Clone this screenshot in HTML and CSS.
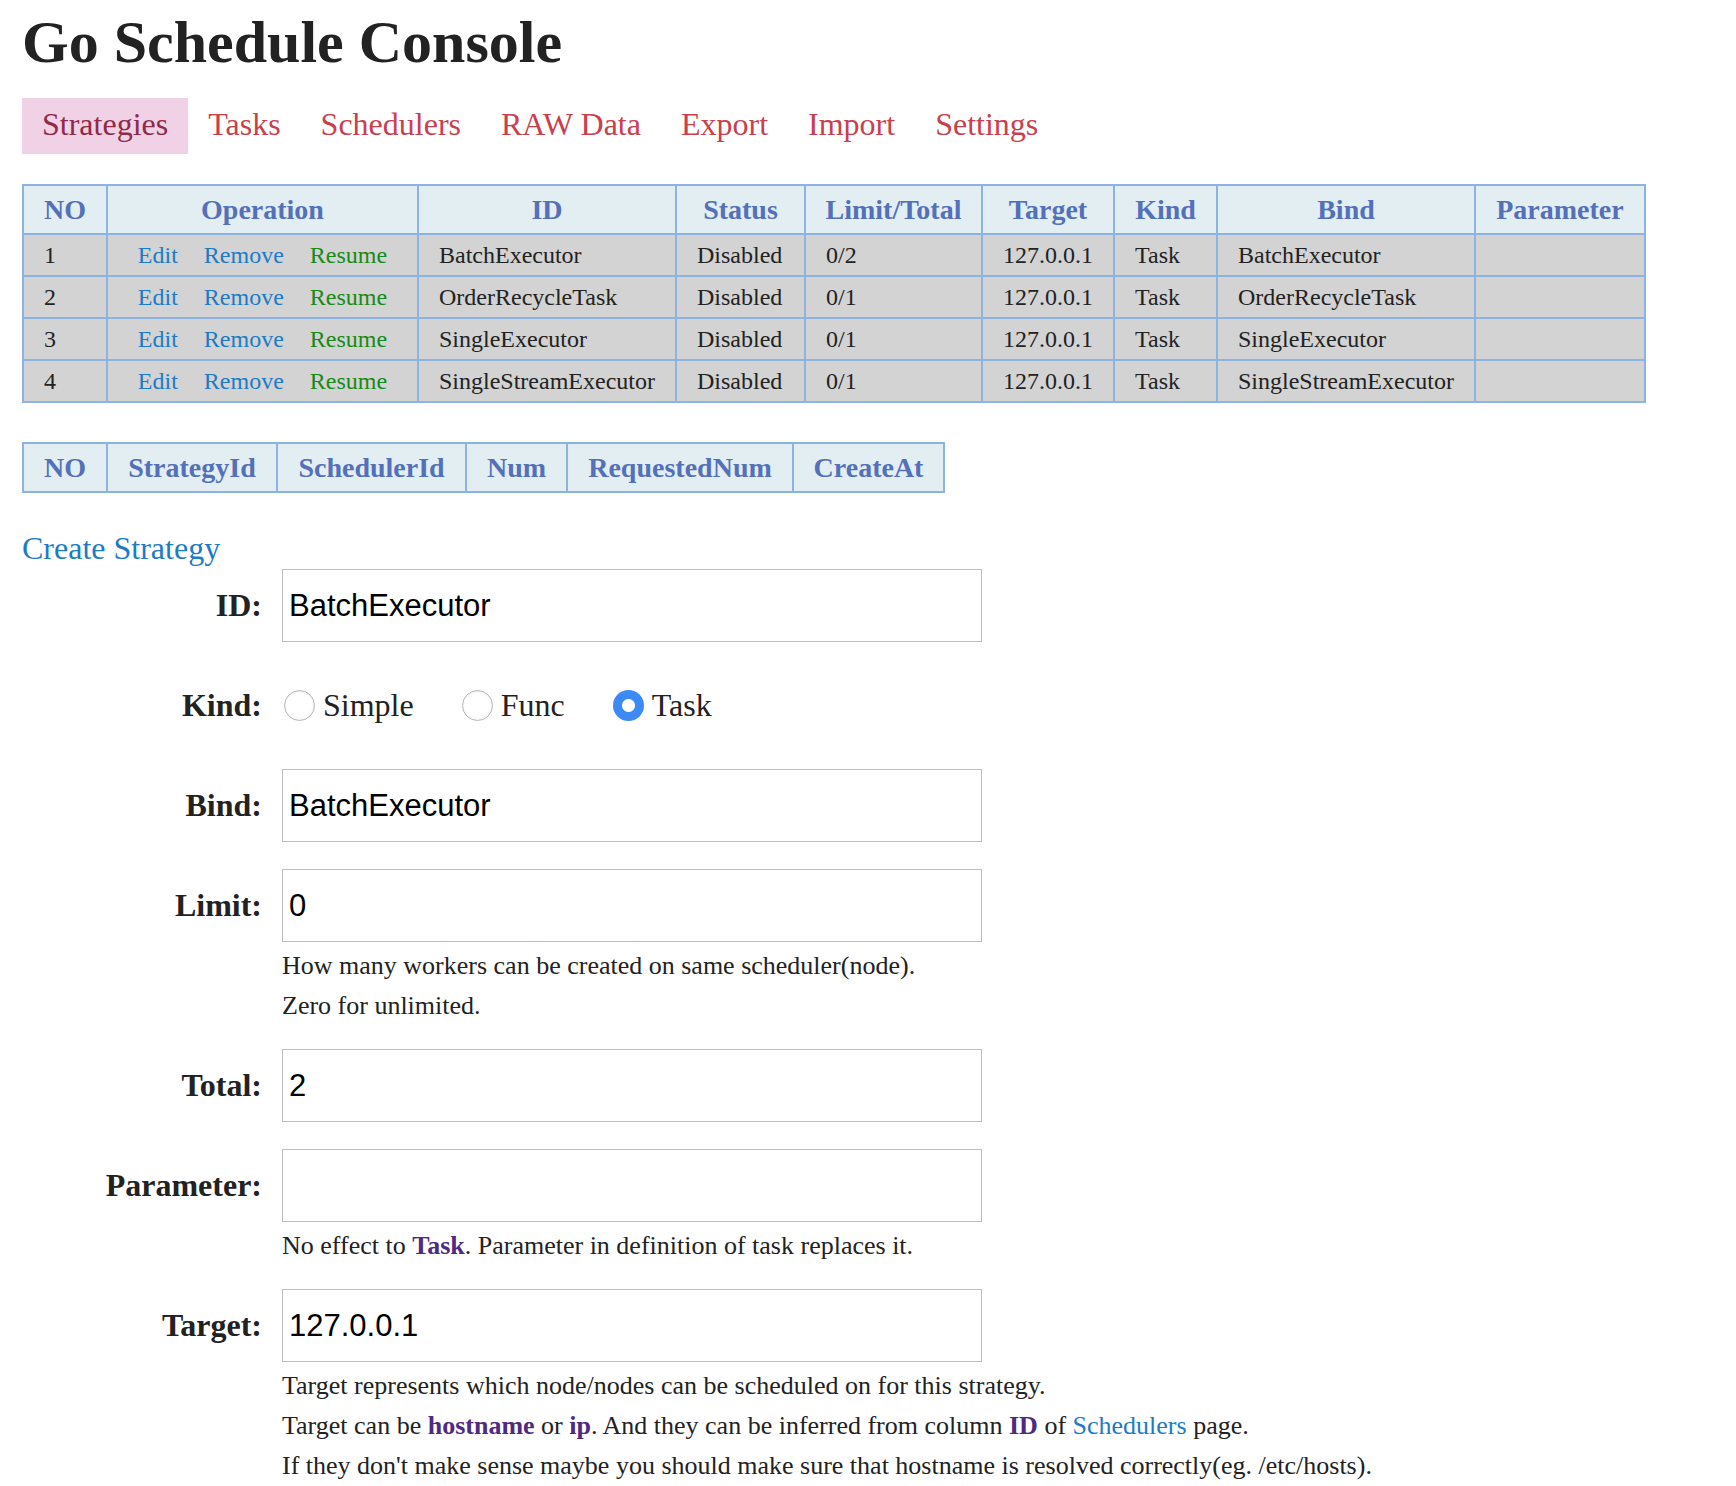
FILE: index.html
```html
<!DOCTYPE html>
<html lang="en">
<head>
<meta charset="utf-8">
<title>Go Schedule Console</title>
<link rel="stylesheet" href="styles.css">
</head>
<body>
<div class="page">
  <h1 class="title">Go Schedule Console</h1>
  <nav class="nav">
    <a class="nav-link active" href="#">Strategies</a>
    <a class="nav-link" href="#">Tasks</a>
    <a class="nav-link" href="#">Schedulers</a>
    <a class="nav-link" href="#">RAW Data</a>
    <a class="nav-link" href="#">Export</a>
    <a class="nav-link" href="#">Import</a>
    <a class="nav-link" href="#">Settings</a>
  </nav>

  <table class="grid grid-strategies">
    <colgroup>
      <col class="w84"><col class="w311"><col class="w258"><col class="w129"><col class="w177"><col class="w132"><col class="w103"><col class="w258"><col class="w170">
    </colgroup>
    <thead>
      <tr><th>NO</th><th>Operation</th><th>ID</th><th>Status</th><th>Limit/Total</th><th>Target</th><th>Kind</th><th>Bind</th><th>Parameter</th></tr>
    </thead>
    <tbody>
      <tr><td>1</td><td class="ops"><a class="op" href="#">Edit</a><a class="op" href="#">Remove</a><a class="op resume" href="#">Resume</a></td><td>BatchExecutor</td><td>Disabled</td><td>0/2</td><td>127.0.0.1</td><td>Task</td><td>BatchExecutor</td><td></td></tr>
      <tr><td>2</td><td class="ops"><a class="op" href="#">Edit</a><a class="op" href="#">Remove</a><a class="op resume" href="#">Resume</a></td><td>OrderRecycleTask</td><td>Disabled</td><td>0/1</td><td>127.0.0.1</td><td>Task</td><td>OrderRecycleTask</td><td></td></tr>
      <tr><td>3</td><td class="ops"><a class="op" href="#">Edit</a><a class="op" href="#">Remove</a><a class="op resume" href="#">Resume</a></td><td>SingleExecutor</td><td>Disabled</td><td>0/1</td><td>127.0.0.1</td><td>Task</td><td>SingleExecutor</td><td></td></tr>
      <tr><td>4</td><td class="ops"><a class="op" href="#">Edit</a><a class="op" href="#">Remove</a><a class="op resume" href="#">Resume</a></td><td>SingleStreamExecutor</td><td>Disabled</td><td>0/1</td><td>127.0.0.1</td><td>Task</td><td>SingleStreamExecutor</td><td></td></tr>
    </tbody>
  </table>

  <table class="grid grid-workers">
    <colgroup>
      <col class="w84"><col class="w170"><col class="w189"><col class="w101"><col class="w226"><col class="w151">
    </colgroup>
    <thead>
      <tr><th>NO</th><th>StrategyId</th><th>SchedulerId</th><th>Num</th><th>RequestedNum</th><th>CreateAt</th></tr>
    </thead>
  </table>

  <h2 class="section-title">Create Strategy</h2>

  <form class="form">
    <div class="form-row">
      <label class="form-label" for="f-id">ID:</label>
      <div class="form-field">
        <input class="text-input" id="f-id" type="text" value="BatchExecutor">
      </div>
    </div>

    <div class="form-row">
      <span class="form-label">Kind:</span>
      <div class="form-field radios">
        <label class="radio-option"><input class="radio" type="radio" name="kind"> Simple</label>
        <label class="radio-option"><input class="radio" type="radio" name="kind"> Func</label>
        <label class="radio-option"><input class="radio" type="radio" name="kind" checked> Task</label>
      </div>
    </div>

    <div class="form-row">
      <label class="form-label" for="f-bind">Bind:</label>
      <div class="form-field">
        <input class="text-input" id="f-bind" type="text" value="BatchExecutor">
      </div>
    </div>

    <div class="form-row">
      <label class="form-label" for="f-limit">Limit:</label>
      <div class="form-field">
        <input class="text-input" id="f-limit" type="text" value="0">
        <div class="help">
          <p>How many workers can be created on same scheduler(node).</p>
          <p>Zero for unlimited.</p>
        </div>
      </div>
    </div>

    <div class="form-row">
      <label class="form-label" for="f-total">Total:</label>
      <div class="form-field">
        <input class="text-input" id="f-total" type="text" value="2">
      </div>
    </div>

    <div class="form-row">
      <label class="form-label" for="f-param">Parameter:</label>
      <div class="form-field">
        <input class="text-input" id="f-param" type="text" value="">
        <div class="help">
          <p>No effect to <b class="term">Task</b>. Parameter in definition of task replaces it.</p>
        </div>
      </div>
    </div>

    <div class="form-row">
      <label class="form-label" for="f-target">Target:</label>
      <div class="form-field">
        <input class="text-input" id="f-target" type="text" value="127.0.0.1">
        <div class="help">
          <p>Target represents which node/nodes can be scheduled on for this strategy.</p>
          <p>Target can be <b class="term">hostname</b> or <b class="term">ip</b>. And they can be inferred from column <b class="term">ID</b> of <a class="inline-link" href="#">Schedulers</a> page.</p>
          <p>If they don't make sense maybe you should make sure that hostname is resolved correctly(eg. /etc/hosts).</p>
        </div>
      </div>
    </div>
  </form>
</div>
</body>
</html>
```

FILE: styles.css
```css
* { box-sizing: border-box; }

html, body {
  margin: 0;
  padding: 0;
  background: #ffffff;
}

body {
  font-family: "Liberation Serif", "Times New Roman", serif;
  color: #222222;
  font-size: 24px;
}

.page {
  padding: 8px 22px 40px 22px;
}

.title {
  margin: 0;
  font-size: 60px;
  line-height: 69px;
  font-weight: bold;
  color: #222222;
}

.nav {
  display: flex;
  margin-top: 21px;
}

.nav-link {
  display: block;
  padding: 0 20px 4px 20px;
  height: 56px;
  line-height: 52px;
  font-size: 32px;
  color: #c9404c;
  text-decoration: none;
}

.nav-link.active {
  background: #f0d1e5;
  color: #8f2a48;
}

.grid {
  border-collapse: collapse;
  table-layout: fixed;
  border: 2px solid #8db3e2;
}

.grid-strategies {
  width: 1624px;
  margin-top: 30px;
}

.grid-workers {
  width: 923px;
  margin-top: 39px;
}

.w84 { width: 84px; }
.w311 { width: 311px; }
.w258 { width: 258px; }
.w129 { width: 129px; }
.w177 { width: 177px; }
.w132 { width: 132px; }
.w103 { width: 103px; }
.w170 { width: 170px; }
.w189 { width: 189px; }
.w101 { width: 101px; }
.w226 { width: 226px; }
.w151 { width: 151px; }

.grid th,
.grid td {
  border: 2px solid #8db3e2;
  white-space: nowrap;
  overflow: hidden;
}

.grid th {
  background: #e2eef2;
  color: #5470bb;
  font-size: 28px;
  font-weight: bold;
  line-height: 33px;
  padding: 7px 4px;
  text-align: center;
}

.grid td {
  background: #d3d3d3;
  font-size: 24px;
  line-height: 28px;
  padding: 6px 20px;
  text-align: left;
  color: #222222;
}

.grid td.ops {
  text-align: center;
  padding: 6px 0;
}

.op {
  color: #1c7bc6;
  text-decoration: none;
  margin: 0 13px;
}

.op.resume {
  color: #178a17;
}

.section-title {
  margin: 37px 0 0 0;
  font-size: 32px;
  line-height: 37px;
  font-weight: normal;
  color: #1c7bc6;
}

.form {
  margin-top: 2px;
  display: flex;
  flex-direction: column;
  gap: 27px;
}

.form-row {
  display: flex;
  align-items: flex-start;
}

.form-label {
  width: 240px;
  margin-right: 20px;
  height: 73px;
  line-height: 73px;
  text-align: right;
  font-size: 32px;
  font-weight: bold;
  color: #222222;
}

.form-field {
  display: flex;
  flex-direction: column;
}

.text-input {
  width: 700px;
  height: 73px;
  border: 1px solid #bdbdbd;
  border-radius: 0;
  padding: 0 6px;
  margin: 0;
  font-family: "Liberation Sans", Arial, sans-serif;
  font-size: 31px;
  color: #000000;
  background: #ffffff;
  outline: none;
}

.help {
  margin-top: 4px;
  margin-bottom: -4px;
  font-size: 26px;
  line-height: 40px;
  color: #222222;
}

.help p {
  margin: 0;
}

.term {
  color: #4e2a80;
  font-weight: bold;
}

.inline-link {
  color: #1c7bc6;
  text-decoration: none;
}

.radios {
  flex-direction: row;
  align-items: center;
  height: 73px;
  gap: 48px;
  padding-left: 2px;
}

.radio-option {
  display: inline-flex;
  align-items: center;
  gap: 8px;
  font-size: 32px;
  line-height: 37px;
  color: #222222;
}

.radio {
  appearance: none;
  -webkit-appearance: none;
  width: 31px;
  height: 31px;
  margin: 0;
  border-radius: 50%;
  border: 1px solid #b8b8b8;
  background: radial-gradient(circle at 50% 40%, #ffffff 55%, #f1f1f1 100%);
  box-shadow: inset 0 1px 2px rgba(0,0,0,0.08);
}

.radio:checked {
  border: none;
  background: radial-gradient(circle, #ffffff 0, #ffffff 6px, #3d8af7 7px, #3d8af7 100%);
  box-shadow: none;
}
```
